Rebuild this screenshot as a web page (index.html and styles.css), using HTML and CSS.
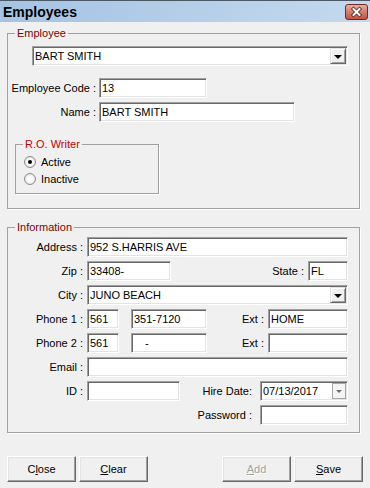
FILE: index.html
```html
<!doctype html>
<html lang="en">
  <head>
    <meta charset="UTF-8" />
    <title>Employees</title>
    <link rel="stylesheet" href="styles.css">
  </head>
  <body>
    <header class="titlebar">
      <h1>Employees</h1>
      <svg class="close" width="23" height="16" viewBox="0 0 23 16">
        <defs>
          <linearGradient id="closegrad" x1="0" y1="0" x2="0" y2="1">
            <stop offset="0" stop-color="#eab2a4"/>
            <stop offset="0.45" stop-color="#d8806e"/>
            <stop offset="1" stop-color="#c4503c"/>
          </linearGradient>
        </defs>
        <rect x="0.5" y="0.5" width="22" height="15" rx="2.5" fill="url(#closegrad)" stroke="#6e2b22"/>
        <path d="M8.5 5 L14.5 11 M14.5 5 L8.5 11" stroke="#4b2420" stroke-width="3.6" stroke-linecap="square"/>
        <path d="M8.5 5 L14.5 11 M14.5 5 L8.5 11" stroke="#fff" stroke-width="2" stroke-linecap="square"/>
      </svg>
    </header>

    <fieldset class="group employee">
      <legend>Employee</legend>
      <div class="combo emp-combo"><span>BART SMITH</span><span class="drop"></span></div>
      <div class="row first">
        <label class="lbl lbl-wide">Employee Code :</label>
        <div class="tb w108">13</div>
      </div>
      <div class="row">
        <label class="lbl lbl-wide">Name :</label>
        <div class="tb w196">BART SMITH</div>
      </div>

      <fieldset class="group writer">
        <legend>R.O. Writer</legend>
        <div class="radio"><span class="circle on"></span>Active</div>
        <div class="radio"><span class="circle"></span>Inactive</div>
      </fieldset>
    </fieldset>

    <fieldset class="group info">
      <legend>Information</legend>
      <div class="row first">
        <label class="lbl">Address :</label>
        <div class="tb grow">952 S.HARRIS AVE</div>
      </div>
      <div class="row">
        <label class="lbl">Zip :</label>
        <div class="tb w84">33408-</div>
        <div class="right">
          <label>State :</label>
          <div class="tb w40">FL</div>
        </div>
      </div>
      <div class="row">
        <label class="lbl">City :</label>
        <div class="combo grow"><span>JUNO BEACH</span><span class="drop"></span></div>
      </div>
      <div class="row">
        <label class="lbl">Phone 1 :</label>
        <div class="tb w32">561</div>
        <div class="tb w76 gap">351-7120</div>
        <div class="right">
          <label>Ext :</label>
          <div class="tb w80">HOME</div>
        </div>
      </div>
      <div class="row">
        <label class="lbl">Phone 2 :</label>
        <div class="tb w32">561</div>
        <div class="tb w76 gap mask">-</div>
        <div class="right">
          <label>Ext :</label>
          <div class="tb w80"></div>
        </div>
      </div>
      <div class="row">
        <label class="lbl">Email :</label>
        <div class="tb grow"></div>
      </div>
      <div class="row">
        <label class="lbl">ID :</label>
        <div class="tb w93"></div>
        <div class="right wide">
          <label>Hire Date:</label>
          <div class="tb w88 date"><span>07/13/2017</span><span class="picker"></span></div>
        </div>
      </div>
      <div class="row">
        <div class="right wide">
          <label>Password :</label>
          <div class="tb w88"></div>
        </div>
      </div>
    </fieldset>

    <footer class="buttons">
      <button class="btn">C<u>l</u>ose</button>
      <button class="btn"><u>C</u>lear</button>
      <button class="btn disabled push"><u>A</u>dd</button>
      <button class="btn"><u>S</u>ave</button>
    </footer>
  </body>
</html>
```

FILE: styles.css
```css
body {
  margin: 0;
  width: 370px;
  height: 488px;
  overflow: hidden;
  background-color: #f0f0f0;
  color: #000;
  font-family: "Liberation Sans", Arial, sans-serif;
  font-size: 11px;
}

.titlebar {
  box-sizing: border-box;
  height: 22px;
  display: flex;
  align-items: center;
  justify-content: space-between;
  padding: 0 2px 0 3px;
  border-top: 1px solid #4d5866;
  background: linear-gradient(to right, #a5c3e3, #c4d9ef);
}
.titlebar h1 {
  margin: 0;
  font-size: 14px;
  font-weight: bold;
}

.group {
  box-sizing: border-box;
  margin: 0;
  padding: 0;
  min-width: 0;
  border: 1px solid #a0a0a0;
  box-shadow: 1px 1px 0 #fff;
}
.group legend {
  margin-left: 7px;
  padding: 0 2px;
  line-height: 13px;
  color: #800000;
}

.employee {
  width: 353px;
  margin: 5px 0 0 7px;
  padding: 0 11px 14px 0;
}
.info {
  width: 353px;
  margin: 12px 0 0 7px;
  padding: 0 11px 7px 0;
}

.writer {
  width: 144px;
  margin: 16px 0 0 7px;
  padding: 0 0 6px 0;
}
.writer legend {
  color: #c80000;
}

.radio {
  display: flex;
  align-items: center;
  height: 17px;
  padding-left: 8px;
}
.radio:first-of-type {
  margin-top: 2px;
}
.circle {
  box-sizing: border-box;
  width: 12px;
  height: 12px;
  margin-right: 5px;
  border: 1px solid #8c8c8c;
  border-radius: 50%;
  background: radial-gradient(circle, #fdfdfd 35%, #d2d2d2 100%);
  display: flex;
  align-items: center;
  justify-content: center;
}
.circle.on::after {
  content: "";
  width: 4px;
  height: 4px;
  border-radius: 50%;
  background-color: #000;
}

.row {
  display: flex;
  align-items: center;
  height: 20px;
  margin-top: 4px;
}
.employee .row.first {
  margin-top: 12px;
}
.info .row.first {
  margin-top: 3px;
}

.lbl {
  box-sizing: border-box;
  width: 79px;
  flex: none;
  padding-right: 4px;
  text-align: right;
  white-space: nowrap;
}
.lbl-wide {
  width: 91px;
  padding-right: 3px;
}

.right {
  margin-left: auto;
  display: flex;
  align-items: center;
  gap: 4px;
}
.right.wide {
  gap: 8px;
}

.tb,
.combo {
  box-sizing: border-box;
  height: 20px;
  flex: none;
  padding-left: 1px;
  line-height: 18px;
  white-space: nowrap;
  background-color: #fff;
  border: 1px solid;
  border-color: #a0a0a0 #fff #fff #a0a0a0;
  box-shadow: inset 1px 1px 0 #696969, inset -1px -1px 0 #e3e3e3;
}
.tb {
  padding-left: 2px;
}
.grow {
  flex: 1;
}
.gap {
  margin-left: 12px;
}
.mask {
  padding-left: 13px;
}
.w32 { width: 32px; }
.w40 { width: 40px; }
.w76 { width: 76px; }
.w80 { width: 80px; }
.w84 { width: 84px; }
.w88 { width: 88px; }
.w93 { width: 93px; }
.w108 { width: 108px; }
.w196 { width: 196px; }

.combo {
  display: flex;
  justify-content: space-between;
  padding: 1px 1px 1px 2px;
  line-height: 16px;
}
.emp-combo {
  margin: 6px 0 0 24px;
}
.drop {
  box-sizing: border-box;
  width: 16px;
  height: 16px;
  background-color: #f0f0f0;
  border: 1px solid;
  border-color: #e3e3e3 #696969 #696969 #e3e3e3;
  box-shadow: inset 1px 1px 0 #fff, inset -1px -1px 0 #a0a0a0;
  display: flex;
  align-items: center;
  justify-content: center;
}
.drop::after {
  content: "";
  border-left: 4px solid transparent;
  border-right: 4px solid transparent;
  border-top: 4px solid #000;
  margin-top: 1px;
}

.date {
  display: flex;
  justify-content: space-between;
  padding: 1px 1px 1px 2px;
  line-height: 16px;
}
.picker {
  box-sizing: border-box;
  width: 14px;
  height: 16px;
  border: 1px solid #a7a7a7;
  background-color: #f4f4f4;
  display: flex;
  align-items: center;
  justify-content: center;
}
.picker::after {
  content: "";
  border-left: 3px solid transparent;
  border-right: 3px solid transparent;
  border-top: 3px solid #6d6d6d;
}

.buttons {
  display: flex;
  gap: 3px;
  margin-top: 23px;
  padding: 0 7px;
}
.btn {
  box-sizing: border-box;
  width: 69px;
  height: 26px;
  padding: 0;
  font: inherit;
  color: #000;
  background-color: #f0f0f0;
  border: 1px solid;
  border-color: #fff #696969 #696969 #fff;
  box-shadow: inset -1px -1px 0 #a0a0a0, inset 1px 1px 0 #e3e3e3;
}
.btn.push {
  margin-left: auto;
}
.btn.disabled {
  color: #a0a0a0;
  text-shadow: 1px 1px 0 #fff;
}
```
